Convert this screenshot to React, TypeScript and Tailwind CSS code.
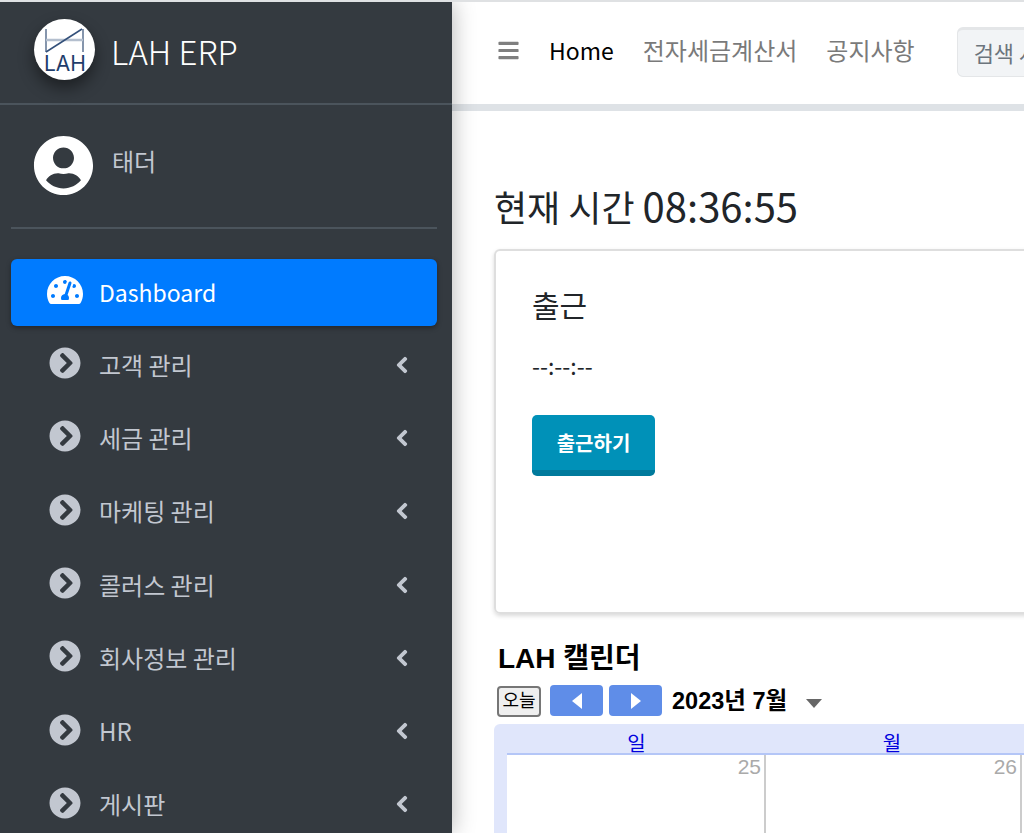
import { FaBars, FaChevronCircleRight, FaChevronLeft, FaTachometerAlt, FaUserCircle } from "react-icons/fa"

const menus = ["고객 관리", "세금 관리", "마케팅 관리", "콜러스 관리", "회사정보 관리", "HR", "게시판"]

function Logo() {
  return (
    <div className="w-[61px] h-[61px] rounded-full bg-white shadow-[0_8px_16px_rgba(0,0,0,0.45)] shrink-0">
      <svg viewBox="0 0 61 61" width="61" height="61">
        <path d="M12 10V33M49 10V33" stroke="#5d7391" strokeWidth="1.5" fill="none" />
        <path d="M12 21H49" stroke="#b4bfce" strokeWidth="2.6" fill="none" />
        <path d="M12 33L48 10" stroke="#33507a" strokeWidth="1.5" fill="none" />
        <text x="31" y="52" textAnchor="middle" fontSize="21" fill="#1f3d6b" fontFamily="Inter, sans-serif" fontWeight="400">LAH</text>
      </svg>
    </div>
  )
}

export default function App() {
  return (
    <div className="flex h-[833px] w-[1024px] overflow-hidden bg-white border-t-2 border-[#dfe1e3] font-['Noto_Sans_CJK_KR','Noto_Sans',sans-serif]">

      <aside className="w-[452px] shrink-0 bg-[#343a40] z-10 shadow-[0_0_22px_rgba(0,0,0,0.3)]">

        <div className="h-[103px] flex items-center pl-[34px] pb-[6px] border-b-2 border-[#4b545c]">
          <Logo />
          <span className="ml-[16px] mt-[5px] text-[33px] font-light text-white">LAH ERP</span>
        </div>

        <div className="ml-[11px] mr-[15px] h-[124px] flex items-center pl-[22px] pb-[1px] border-b-2 border-[#4b545c]">
          <FaUserCircle className="text-white text-[61px] shrink-0" />
          <span className="ml-[18px] mb-[9px] text-[24px] text-[#c2c7d0]">태더</span>
        </div>

        <nav className="ml-[11px] mr-[15px] mt-[30px]">
          <div className="h-[67px] flex items-center pl-[36px] bg-[#007bff] rounded-[6px] shadow-[0_2px_5px_rgba(0,0,0,0.35)] text-white">
            <FaTachometerAlt className="text-[36px] w-[36px] mb-[6px]" />
            <span className="ml-[16px] text-[23px]">Dashboard</span>
          </div>

          <ul className="mt-[2px]">
            {menus.map(menu => (
              <li key={menu} className="h-[73.3px] flex items-center pl-[38px] pr-[26px] text-[#c2c7d0]">
                <FaChevronCircleRight className="text-[32px] w-[32px] mb-[3px]" />
                <span className="ml-[18px] text-[24px]">{menu}</span>
                <FaChevronLeft className="ml-auto text-[18px] stroke-current stroke-[30px]" />
              </li>
            ))}
          </ul>
        </nav>

      </aside>

      <main className="flex-1 min-w-0 overflow-hidden">

        <header className="h-[109px] flex items-center pl-[45px] pb-[6px] border-b-[7px] border-[#dee2e6] whitespace-nowrap">
          <FaBars className="text-[23px] text-[#7f7f7f] shrink-0" />
          <span className="ml-[29px] text-[23px] text-black">Home</span>
          <span className="ml-[29px] text-[24px] text-[#7a7a7a]">전자세금계산서</span>
          <span className="ml-[29px] text-[24px] text-[#7a7a7a]">공지사항</span>
          <div className="ml-[42px] mt-[3px] w-[200px] h-[50px] shrink-0 flex items-center pl-[16px] bg-[#f2f4f6] rounded-[6px] border border-[#e4e6e8] border-t-[3px] text-[22px] text-[#6c757d]">
            검색 사항
          </div>
        </header>

        <section className="pl-[42px] w-[900px]">
          <h1 className="mt-[67px] text-[36px] leading-[54px] text-[#212529]">
            현재 시간 <span className="text-[40px]">08:36:55</span>
          </h1>

          <div className="mt-[16px] h-[365px] px-[36px] rounded-[6px] border-2 border-[#dedede] shadow-[0_2px_4px_rgba(0,0,0,0.15)]">
            <h2 className="mt-[30px] text-[30px] leading-[46px] text-[#212529]">출근</h2>
            <p className="mt-[20px] text-[23px] leading-[36px] text-[#212529]">--:--:--</p>
            <button className="mt-[32px] w-[123px] h-[61px] rounded-[5px] border-b-[6px] border-[#007a9c] bg-[#0091b8] text-white text-[20px] font-bold">
              출근하기
            </button>
          </div>
        </section>

        <section className="pl-[42px] w-[900px] font-['Liberation_Sans','Noto_Sans_CJK_KR',sans-serif]">
          <h2 className="mt-[23px] ml-[4px] text-[28px] leading-[44px] font-bold text-black">LAH 캘린더</h2>

          <div className="ml-[3px] mt-[5px] flex items-center h-[32px]">
            <button className="mb-[2px] w-[44px] h-[31px] rounded-[4px] border-2 border-[#767676] bg-[#efefef] text-[18px] text-black">오늘</button>
            <button className="mb-[3px] ml-[9px] w-[53px] h-[31px] rounded-[4px] bg-[#5f8de8] flex items-center justify-center">
              <span className="w-0 h-0 border-y-[8px] border-y-transparent border-r-[10px] border-r-white" />
            </button>
            <button className="mb-[3px] ml-[6px] w-[53px] h-[31px] rounded-[4px] bg-[#5f8de8] flex items-center justify-center">
              <span className="w-0 h-0 border-y-[8px] border-y-transparent border-l-[10px] border-l-white" />
            </button>
            <span className="ml-[10px] text-[23.5px] font-bold text-black">2023년 7월</span>
            <span className="ml-[19px] mt-[3px] w-0 h-0 border-x-[8px] border-x-transparent border-t-[9px] border-t-[#666]" />
          </div>

          <div className="mt-[6px] pl-[13px] pt-[5px] h-[200px] bg-[#e0e6fb] rounded-tl-[6px]">
            <div className="grid grid-cols-[259px_256px] h-[26px] border-b-2 border-[#b4c6f7] text-[20px] leading-[30px] text-center text-[#0000dd]">
              <span>일</span>
              <span className="pr-[4px]">월</span>
            </div>
            <div className="grid grid-cols-[259px_256px] h-full bg-white text-[21px] leading-[24px] text-right text-[#aaaaaa]">
              <div className="pr-[3px] border-r-2 border-[#cccccc]">25</div>
              <div className="pr-[3px] border-r-2 border-[#cccccc]">26</div>
            </div>
          </div>
        </section>

      </main>
    </div>
  )
}
